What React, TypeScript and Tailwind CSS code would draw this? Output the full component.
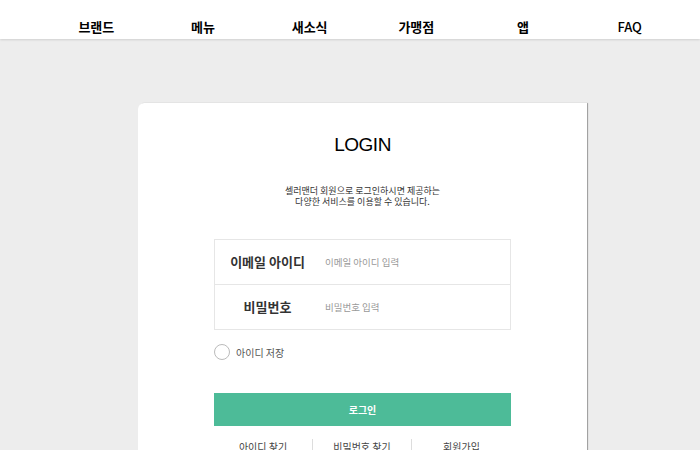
import { FunctionComponent } from "react";

const NAV = ["브랜드", "메뉴", "새소식", "가맹점", "앱", "FAQ"];

const FONT = {
  fontFamily: '"Noto Sans CJK KR", "Noto Sans", sans-serif',
};

const App: FunctionComponent = (): JSX.Element => {
  return (
    <div
      className="relative w-[700px] h-[450px] overflow-hidden bg-[#ededed] flex flex-col"
      style={FONT}
    >
      <div className="relative z-10 shrink-0 w-full h-[39px] bg-white shadow-[0_1px_2px_rgba(0,0,0,0.12)] flex flex-row">
        <div className="ml-[43px] w-[640px] grid grid-cols-6 h-full items-center pt-[14px]">
          {NAV.map((item: string, index: number) => {
            return (
              <div
                key={index}
                className={`text-center text-[13px] leading-none text-black ${
                  item === "FAQ" ? "font-medium" : "font-bold"
                }`}
              >
                {item}
              </div>
            );
          })}
        </div>
      </div>
      <div className="relative flex-1 flex flex-row justify-start">
        <div className="shrink-0 ml-[138px] mt-[64px] w-[449px] h-[400px] bg-white rounded-tl-md shadow-[1px_0_1px_rgba(0,0,0,0.35)] flex flex-col items-center">
          <div
            className="mt-[32px] text-[19px] leading-none text-black tracking-tight"
            style={{ fontFamily: '"Liberation Sans", sans-serif' }}
          >
            LOGIN
          </div>
          <div className="mt-[31px] text-center text-[9px] leading-[11px] text-[#333]">
            <div>셀러맨더 회원으로 로그인하시면 제공하는</div>
            <div>다양한 서비스를 이용할 수 있습니다.</div>
          </div>
          <div className="mt-[32px] w-[297px] border border-[#e6e6e6] flex flex-col">
            <div className="h-[45px] flex flex-row items-center border-b border-[#e6e6e6]">
              <div className="w-[105px] text-center text-[13px] font-bold text-[#333]">
                이메일 아이디
              </div>
              <div className="ml-[5px] text-[9.5px] text-[#999]">
                이메일 아이디 입력
              </div>
            </div>
            <div className="h-[44px] flex flex-row items-center">
              <div className="w-[105px] text-center text-[13px] font-bold text-[#333]">
                비밀번호
              </div>
              <div className="ml-[5px] text-[9.5px] text-[#999]">
                비밀번호 입력
              </div>
            </div>
          </div>
          <div className="mt-[14px] w-[297px] flex flex-row items-center gap-[6px]">
            <div className="w-[16px] h-[16px] rounded-full border border-[#bbb] bg-white" />
            <div className="text-[10px] text-[#555]">아이디 저장</div>
          </div>
          <div className="mt-[33px] w-[297px] h-[33px] bg-[#4dbb98] flex items-center justify-center text-white text-[10px] font-bold">
            로그인
          </div>
          <div className="mt-[13px] w-[297px] grid grid-cols-3 text-[10px] text-[#444]">
            <div className="text-center border-r border-[#ddd]">아이디 찾기</div>
            <div className="text-center border-r border-[#ddd]">비밀번호 찾기</div>
            <div className="text-center">회원가입</div>
          </div>
        </div>
      </div>
    </div>
  );
};

export default App;
